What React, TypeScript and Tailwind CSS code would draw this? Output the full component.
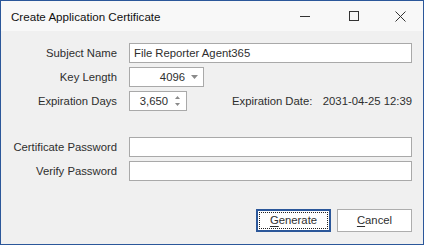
import React from "react";

const Field = ({ label, children }: { label: string; children: React.ReactNode }) => (
  <div className="flex items-center h-[20px]">
    <div className="w-[116px] shrink-0 text-right leading-[21px] h-[20px]">{label}</div>
    <div className="ml-[12px] flex-1 flex items-center h-full">{children}</div>
  </div>
);

const TextBox = ({ value = "", className = "" }: { value?: string; className?: string }) => (
  <div className={`h-[20px] bg-white border border-[#a9a9a9] pl-[4px] leading-[19px] ${className}`}>
    {value}
  </div>
);

export default function App() {
  return (
    <div className="w-[424px] h-[245px] border border-[#2b579a] bg-[#f0f0f0] flex flex-col font-['Liberation_Sans',Arial,sans-serif] text-[11.3px] text-[#2e2e2e] select-none">
      {/* title bar */}
      <div className="h-[30px] shrink-0 bg-[#f8f8f8] flex items-center">
        <div className="flex-1 pl-[10px] pt-[1px] text-[#111] text-[11.6px]">Create Application Certificate</div>
        <div className="w-[46px] h-full flex items-center justify-center pr-[6px]">
          <svg width="10" height="10" viewBox="0 0 10 10">
            <line x1="0" y1="5.5" x2="10" y2="5.5" stroke="#333" strokeWidth="1" />
          </svg>
        </div>
        <div className="w-[46px] h-full flex items-center justify-center">
          <svg width="10" height="10" viewBox="0 0 10 10">
            <rect x="0.5" y="0.5" width="9" height="9" fill="none" stroke="#333" strokeWidth="1" />
          </svg>
        </div>
        <div className="w-[46px] h-full flex items-center justify-center">
          <svg width="11" height="11" viewBox="0 0 11 11">
            <path d="M0.5 0.5 L10.5 10.5 M10.5 0.5 L0.5 10.5" stroke="#333" strokeWidth="1" />
          </svg>
        </div>
      </div>

      {/* body */}
      <div className="flex-1 flex flex-col pt-[12px] pr-[11px] pb-[12px]">
        <Field label="Subject Name">
          <TextBox value="File Reporter Agent365" className="flex-1" />
        </Field>

        <div className="mt-[4px]">
          <Field label="Key Length">
            <div className="w-[75px] h-[20px] bg-white border border-[#a9a9a9] flex items-center justify-end leading-[19px]">
              <span>4096</span>
              <span className="w-[18px] flex justify-center">
                <svg width="7" height="4" viewBox="0 0 7 4">
                  <path d="M0 0 L7 0 L3.5 4 Z" fill="#8a8a8a" />
                </svg>
              </span>
            </div>
          </Field>
        </div>

        <div className="mt-[4px]">
          <Field label="Expiration Days">
            <div className="w-[58px] h-[20px] bg-white border border-[#a9a9a9] flex items-center justify-end leading-[19px]">
              <span>3,650</span>
              <span className="w-[18px] flex flex-col items-center gap-[4px]">
                <svg width="5" height="3" viewBox="0 0 5 3">
                  <path d="M0 3 L5 3 L2.5 0 Z" fill="#8a8a8a" />
                </svg>
                <svg width="5" height="3" viewBox="0 0 5 3">
                  <path d="M0 0 L5 0 L2.5 3 Z" fill="#8a8a8a" />
                </svg>
              </span>
            </div>
            <span className="ml-[45px] leading-[21px] h-[20px]">Expiration Date:</span>
            <span className="ml-auto leading-[21px] h-[20px]">2031-04-25 12:39</span>
          </Field>
        </div>

        <div className="mt-[26px]">
          <Field label="Certificate Password">
            <TextBox className="flex-1" />
          </Field>
        </div>

        <div className="mt-[4px]">
          <Field label="Verify Password">
            <TextBox className="flex-1" />
          </Field>
        </div>

        <div className="flex-1" />

        <div className="flex justify-end gap-[6px]">
          <button className="w-[75px] h-[23px] border-2 border-[#2b579a] bg-white p-[1px] flex">
            <span className="flex-1 border border-dotted border-[#222] flex items-center justify-center leading-none">
              <span className="underline underline-offset-2">G</span>enerate
            </span>
          </button>
          <button className="w-[75px] h-[23px] border border-[#adadad] bg-white flex items-center justify-center leading-none">
            <span>
              <span className="underline underline-offset-2">C</span>ancel
            </span>
          </button>
        </div>
      </div>
    </div>
  );
}
